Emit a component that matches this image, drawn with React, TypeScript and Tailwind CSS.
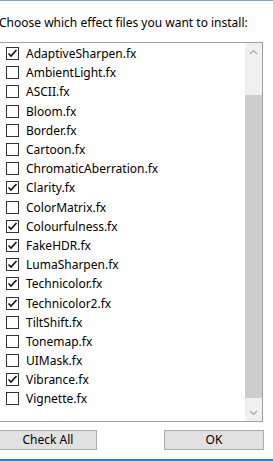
const effects: { name: string; checked: boolean }[] = [
  { name: 'AdaptiveSharpen.fx', checked: true },
  { name: 'AmbientLight.fx', checked: false },
  { name: 'ASCII.fx', checked: false },
  { name: 'Bloom.fx', checked: false },
  { name: 'Border.fx', checked: false },
  { name: 'Cartoon.fx', checked: false },
  { name: 'ChromaticAberration.fx', checked: false },
  { name: 'Clarity.fx', checked: true },
  { name: 'ColorMatrix.fx', checked: false },
  { name: 'Colourfulness.fx', checked: true },
  { name: 'FakeHDR.fx', checked: true },
  { name: 'LumaSharpen.fx', checked: true },
  { name: 'Technicolor.fx', checked: true },
  { name: 'Technicolor2.fx', checked: true },
  { name: 'TiltShift.fx', checked: false },
  { name: 'Tonemap.fx', checked: false },
  { name: 'UIMask.fx', checked: false },
  { name: 'Vibrance.fx', checked: true },
  { name: 'Vignette.fx', checked: false },
];

const font = { fontFamily: '"Noto Sans", "Liberation Sans", sans-serif' };

function CheckBox({ checked }: { checked: boolean }) {
  return (
    <span className="flex h-[13px] w-[13px] shrink-0 items-center justify-center border border-[#333333] bg-white">
      {checked && (
        <svg width="11" height="11" viewBox="0 0 11 11">
          <path d="M1.5 5.5 L4 8 L9.5 2" fill="none" stroke="#111" strokeWidth="1.6" />
        </svg>
      )}
    </span>
  );
}

function Chevron({ up }: { up: boolean }) {
  return (
    <svg width="9" height="6" viewBox="0 0 9 6">
      <path
        d={up ? 'M1 5 L4.5 1.5 L8 5' : 'M1 1 L4.5 4.5 L8 1'}
        fill="none"
        stroke="#a6a6a6"
        strokeWidth="1.2"
      />
    </svg>
  );
}

export default function App() {
  return (
    <div
      className="flex h-[461px] w-[273px] flex-col overflow-hidden border-t border-b-2 border-t-[#7fa6b6] border-b-[#1883d7] bg-white text-[12px] text-black"
      style={font}
    >
      <div className="h-[41px] pt-[13px] -ml-[1px] text-[12px] leading-[17px] whitespace-nowrap">
        Choose which effect files you want to install:
      </div>
      <div className="flex h-[380px] w-[263px] border-y border-r border-[#a0a0a0]">
        <ul className="m-0 flex-1 list-none p-0 pt-[1px]">
          {effects.map((e) => (
            <li key={e.name} className="flex h-[19.2px] items-center gap-[7px] pl-[6px] whitespace-nowrap">
              <CheckBox checked={e.checked} />
              <span className="leading-[17px]">{e.name}</span>
            </li>
          ))}
        </ul>
        <div className="flex w-[17px] flex-col bg-[#f0f0f0]">
          <div className="flex h-[17px] items-center justify-center">
            <Chevron up />
          </div>
          <div className="h-[35px]" />
          <div className="h-[303px] bg-[#cdcdcd]" />
          <div className="flex-1" />
          <div className="flex h-[17px] items-center justify-center">
            <Chevron up={false} />
          </div>
        </div>
      </div>
      <div className="mt-[8px] flex h-[20px] justify-between pr-[9px]">
        <button className="-ml-[1px] w-[98px] border border-[#adadad] bg-[#e1e1e1] leading-[18px]">
          Check All
        </button>
        <button className="w-[100px] border border-[#adadad] bg-[#e1e1e1] leading-[18px]">
          OK
        </button>
      </div>
    </div>
  );
}
